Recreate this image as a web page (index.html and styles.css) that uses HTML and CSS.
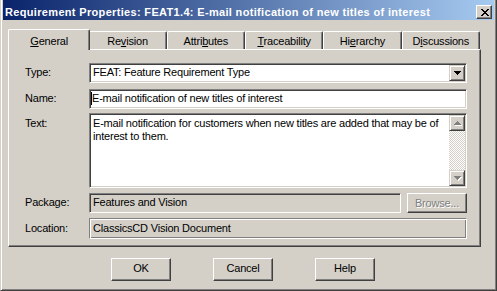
FILE: index.html
```html
<!DOCTYPE html>
<html>
<head>
<meta charset="utf-8">
<link rel="stylesheet" href="styles.css">
</head>
<body>
<div class="window">
  <div class="titlebar">
    <span class="title">Requirement Properties: FEAT1.4: E-mail notification of new titles of interest</span>
    <span class="close">
      <svg width="8" height="7" viewBox="0 0 8 7" shape-rendering="crispEdges">
        <g fill="#000">
          <rect x="0" y="0" width="2" height="1"/><rect x="6" y="0" width="2" height="1"/>
          <rect x="1" y="1" width="2" height="1"/><rect x="5" y="1" width="2" height="1"/>
          <rect x="2" y="2" width="4" height="1"/>
          <rect x="3" y="3" width="2" height="1"/>
          <rect x="2" y="4" width="4" height="1"/>
          <rect x="1" y="5" width="2" height="1"/><rect x="5" y="5" width="2" height="1"/>
          <rect x="0" y="6" width="2" height="1"/><rect x="6" y="6" width="2" height="1"/>
        </g>
      </svg>
    </span>
  </div>

  <div class="tabs">
    <div class="tab active"><u>G</u>eneral</div>
    <div class="tab">Re<u>v</u>ision</div>
    <div class="tab">Attri<u>b</u>utes</div>
    <div class="tab"><u>T</u>raceability</div>
    <div class="tab">Hi<u>e</u>rarchy</div>
    <div class="tab">D<u>i</u>scussions</div>
  </div>

  <div class="panel">
    <div class="row">
      <span class="lbl">Type:</span>
      <div class="field combo">
        <span class="val">FEAT: Feature Requirement Type</span>
        <span class="arrowbtn">
          <svg width="7" height="4" viewBox="0 0 7 4" shape-rendering="crispEdges">
            <g fill="#000"><rect x="0" y="0" width="7" height="1"/><rect x="1" y="1" width="5" height="1"/><rect x="2" y="2" width="3" height="1"/><rect x="3" y="3" width="1" height="1"/></g>
          </svg>
        </span>
      </div>
    </div>

    <div class="row row-name">
      <span class="lbl">Name:</span>
      <div class="field edit"><span class="caret"></span>E-mail notification of new titles of interest</div>
    </div>

    <div class="row row-text">
      <span class="lbl lbl-text">Text:</span>
      <div class="field area">
        <div class="areatext">E-mail notification for customers when new titles are added that may be of<br>interest to them.</div>
        <div class="scrollbar">
          <span class="arrowbtn sb">
            <svg width="8" height="5" viewBox="0 0 8 5" shape-rendering="crispEdges">
              <g fill="#fff"><rect x="4" y="1" width="1" height="1"/><rect x="3" y="2" width="3" height="1"/><rect x="2" y="3" width="5" height="1"/><rect x="1" y="4" width="7" height="1"/></g>
              <g fill="#808080"><rect x="3" y="0" width="1" height="1"/><rect x="2" y="1" width="3" height="1"/><rect x="1" y="2" width="5" height="1"/><rect x="0" y="3" width="7" height="1"/></g>
            </svg>
          </span>
          <span class="track"></span>
          <span class="arrowbtn sb">
            <svg width="8" height="5" viewBox="0 0 8 5" shape-rendering="crispEdges">
              <g fill="#fff"><rect x="1" y="1" width="7" height="1"/><rect x="2" y="2" width="5" height="1"/><rect x="3" y="3" width="3" height="1"/><rect x="4" y="4" width="1" height="1"/></g>
              <g fill="#808080"><rect x="0" y="0" width="7" height="1"/><rect x="1" y="1" width="5" height="1"/><rect x="2" y="2" width="3" height="1"/><rect x="3" y="3" width="1" height="1"/></g>
            </svg>
          </span>
        </div>
      </div>
    </div>

    <div class="row row-pkg">
      <span class="lbl">Package:</span>
      <div class="field readonly">Features and Vision</div>
      <span class="btn browse">Browse...</span>
    </div>

    <div class="row row-loc">
      <span class="lbl lbl-loc">Location:</span>
      <div class="field etched">ClassicsCD Vision Document</div>
    </div>
  </div>

  <div class="buttons">
    <span class="btn dlg">OK</span>
    <span class="btn dlg">Cancel</span>
    <span class="btn dlg">Help</span>
  </div>
</div>
</body>
</html>
```

FILE: styles.css
```css
html, body {
  margin: 0;
  padding: 0;
  background: #d4d0c8;
}

.window {
  box-sizing: border-box;
  width: 497px;
  height: 291px;
  background: #d4d0c8;
  border-left: 1px solid #d4d0c8;
  border-right: 1px solid #404040;
  border-bottom: 1px solid #404040;
  box-shadow: inset 1px 0 #fff, inset -1px -1px #808080;
  padding: 0 2px 2px 2px;
  font: 11px/13px "Liberation Sans", Arial, sans-serif;
  letter-spacing: -0.2px;
  color: #000;
  display: flex;
  flex-direction: column;
}

.titlebar {
  box-sizing: border-box;
  height: 20px;
  flex: none;
  display: flex;
  justify-content: space-between;
  align-items: flex-start;
  padding: 5px 2px 0 2px;
  background: linear-gradient(to right, #0a246a, #a6caf0);
  color: #fff;
  font-weight: bold;
  letter-spacing: 0.33px;
  line-height: 14px;
  white-space: nowrap;
}

.close {
  box-sizing: border-box;
  width: 16px;
  height: 14px;
  display: flex;
  align-items: center;
  justify-content: center;
  padding-left: 1px;
  background: #d4d0c8;
  border: 1px solid;
  border-color: #fff #404040 #404040 #fff;
  box-shadow: inset -1px -1px #808080;
}

.close svg { display: block; }

.tabs {
  display: grid;
  grid-template-columns: repeat(6, 1fr);
  grid-template-rows: 20px;
  width: 470px;
  margin: 9px 0 0 7px;
  flex: none;
}

.tab {
  box-sizing: border-box;
  height: 18px;
  margin-top: 2px;
  border: 1px solid;
  border-color: #fff #404040 transparent #fff;
  border-bottom: 0;
  border-radius: 2px 2px 0 0;
  box-shadow: inset -1px 0 #808080;
  background: #d4d0c8;
  text-align: center;
  padding-top: 3px;
  white-space: nowrap;
}

.tab.active {
  height: 21px;
  margin: 0 -2px;
  padding-top: 5px;
  position: relative;
  z-index: 1;
}

.panel {
  box-sizing: border-box;
  width: 473px;
  height: 198px;
  margin-left: 5px;
  flex: none;
  border: 1px solid;
  border-color: #fff #404040 #404040 #fff;
  box-shadow: inset -1px -1px #808080;
  padding: 13px 13px 0 16px;
}

.row { display: flex; }
.row-name { margin-top: 6px; }
.row-text { margin-top: 4px; }
.row-pkg { margin-top: 5px; }
.row-loc { margin-top: 5px; }

.lbl {
  width: 64px;
  flex: none;
  padding-top: 3px;
}
.lbl-text { padding-top: 4px; }
.lbl-loc { padding-top: 4px; }

.field {
  flex: 1;
  min-width: 0;
  box-sizing: border-box;
  height: 20px;
  border: 1px solid;
  border-color: #808080 #fff #fff #808080;
  box-shadow: inset 1px 1px #404040, inset -1px -1px #d4d0c8;
  background: #fff;
  padding: 2px 2px 0 3px;
  white-space: nowrap;
  overflow: hidden;
}

.combo {
  display: flex;
  padding: 1px 1px 1px 3px;
}
.combo .val {
  flex: 1;
  padding-top: 1px;
}

.arrowbtn {
  box-sizing: border-box;
  width: 16px;
  height: 16px;
  flex: none;
  display: flex;
  align-items: center;
  justify-content: center;
  background: #d4d0c8;
  border: 1px solid;
  border-color: #d4d0c8 #404040 #404040 #d4d0c8;
  box-shadow: inset 1px 1px #fff, inset -1px -1px #808080;
}
.arrowbtn svg { display: block; }
.sb svg { margin-left: 1px; }

.edit { padding-left: 1px; }
.caret {
  display: inline-block;
  width: 1px;
  height: 13px;
  background: #000;
  vertical-align: top;
}

.area {
  height: 75px;
  display: flex;
  padding: 1px;
}
.areatext {
  flex: 1;
  padding: 2px 0 0 2px;
  white-space: nowrap;
  overflow: hidden;
}
.scrollbar {
  width: 16px;
  flex: none;
  display: flex;
  flex-direction: column;
}
.track {
  flex: 1;
  background: repeating-conic-gradient(#fff 0 25%, #d4d0c8 0 50%) 0 0 / 2px 2px;
}

.readonly {
  background: #d4d0c8;
  padding-left: 3px;
}

.etched {
  height: 21px;
  background: #d4d0c8;
  box-shadow: inset 1px 1px #fff, inset -1px -1px #808080;
  padding: 3px 2px 0 3px;
}

.btn {
  box-sizing: border-box;
  display: block;
  flex: none;
  background: #d4d0c8;
  border: 1px solid;
  border-color: #fff #404040 #404040 #fff;
  box-shadow: inset -1px -1px #808080;
  text-align: center;
  white-space: nowrap;
}

.browse {
  width: 60px;
  height: 20px;
  margin-left: 6px;
  padding-top: 3px;
  color: #808080;
  text-shadow: 1px 1px 0 #fff;
}

.buttons {
  display: flex;
  gap: 42px;
  margin: 11px 0 0 108px;
  flex: none;
}

.dlg {
  width: 60px;
  height: 23px;
  padding-top: 3px;
}
```
